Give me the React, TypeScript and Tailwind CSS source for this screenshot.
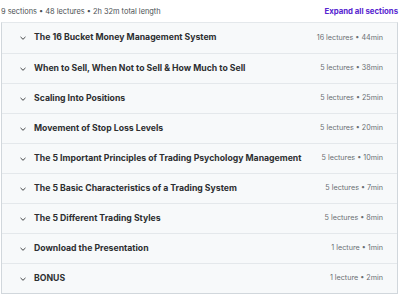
import React from "react";

const sections = [
  ["The 16 Bucket Money Management System", "16 lectures • 44min"],
  ["When to Sell, When Not to Sell & How Much to Sell", "5 lectures • 38min"],
  ["Scaling Into Positions", "5 lectures • 25min"],
  ["Movement of Stop Loss Levels", "5 lectures • 20min"],
  ["The 5 Important Principles of Trading Psychology Management", "5 lectures • 10min"],
  ["The 5 Basic Characteristics of a Trading System", "5 lectures • 7min"],
  ["The 5 Different Trading Styles", "5 lectures • 8min"],
  ["Download the Presentation", "1 lecture • 1min"],
  ["BONUS", "1 lecture • 2min"],
];

function Chevron() {
  return (
    <svg width="8" height="8" viewBox="0 0 8 8" className="shrink-0">
      <path d="M1.8 3.2 L4 5.3 L6.2 3.2" fill="none" stroke="#2d2f31" strokeWidth="0.9" strokeLinecap="round" strokeLinejoin="round" />
    </svg>
  );
}

export default function App() {
  return (
    <div className="w-[400px] h-[295px] bg-white overflow-hidden" style={{ fontFamily: "Inter, 'Noto Sans', sans-serif" }}>
      <div className="flex items-center justify-between h-[22px] pl-[1px] pr-[2px] pt-[1px]">
        <span className="text-[7.4px] text-[#4a4f53]">9 sections • 48 lectures • 2h 32m total length</span>
        <span className="text-[7.8px] font-bold text-[#5624d0]">Expand all sections</span>
      </div>
      <div className="mx-[1px] w-[397px] border border-[#d1d7dc] border-t-[#e4e8eb]">
        {sections.map(([title, meta], i) => (
          <div
            key={i}
            className={`flex items-center h-[30px] bg-[#f7f9fa] pl-[17px] pr-[14px] ${i > 0 ? "border-t border-[#e4e8eb]" : ""}`}
          >
            <Chevron />
            <span className="ml-[7px] flex-1 text-[8.7px] font-bold text-[#2d2f31] whitespace-nowrap">{title}</span>
            <span className="text-[7.2px] text-[#6a6f73] whitespace-nowrap">{meta}</span>
          </div>
        ))}
      </div>
    </div>
  );
}
